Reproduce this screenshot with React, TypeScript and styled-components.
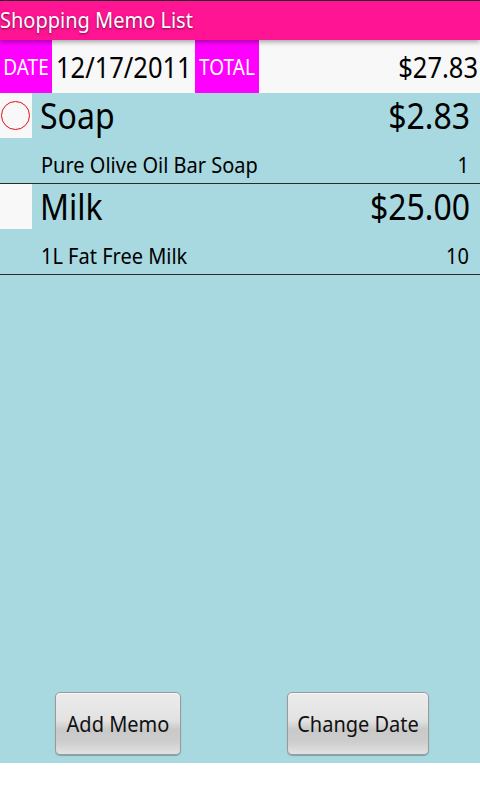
import React from "react";
import styled, { createGlobalStyle } from "styled-components";

const Global = createGlobalStyle`
  html, body { margin: 0; padding: 0; background: #ffffff; }
  body { font-family: "Noto Sans", "Open Sans", sans-serif; }
  * { box-sizing: border-box; }
`;

const Screen = styled.div`
  width: 480px;
  height: 800px;
  display: flex;
  flex-direction: column;
  background: #ffffff;
`;

const Tall = styled.span`
  display: inline-block;
  transform: scaleY(1.11);
  transform-origin: 50% 55%;
`;

const TitleBar = styled.div`
  height: 40px;
  border-top: 1px solid #222;
  background: #ff1493;
  color: #ffffff;
  font-size: 20px;
  line-height: 38px;
  text-shadow: 0 1px 2px rgba(0, 0, 0, 0.55);
  position: relative;
  z-index: 2;
  box-shadow: 0 2px 5px rgba(0, 0, 0, 0.35);
`;

const HeaderRow = styled.div`
  height: 53px;
  display: flex;
  align-items: stretch;
`;

const Label = styled.div<{ $w: number }>`
  width: ${(p) => p.$w}px;
  background: #ff00ff;
  color: #ffffff;
  font-size: 19px;
  display: flex;
  align-items: center;
  justify-content: center;
`;

const Field = styled.div<{ $w?: number; $align?: "left" | "right" }>`
  ${(p) => (p.$w ? `width: ${p.$w}px;` : "flex: 1;")}
  background: #f8f8f8;
  color: #000;
  font-size: 25.5px;
  display: flex;
  align-items: center;
  justify-content: ${(p) => (p.$align === "right" ? "flex-end" : "flex-start")};
  padding: ${(p) => (p.$align === "right" ? "0 2px 0 0" : "0 0 0 4px")};
`;

const Body = styled.div`
  flex: 0 0 670px;
  background: #a8d8e0;
  display: flex;
  flex-direction: column;
`;

const List = styled.div`
  flex: 1;
`;

const Item = styled.div`
  height: 91px;
  border-bottom: 1px solid #2a2a2a;
  display: grid;
  grid-template-columns: 40px 1fr auto;
  grid-template-rows: 45px 45px;
`;

const Check = styled.div`
  width: 32px;
  height: 45px;
  background: #f8f8f8;
  display: flex;
  align-items: center;
  justify-content: center;
`;

const Circle = styled.div`
  width: 29px;
  height: 29px;
  border-radius: 50%;
  border: 1px solid #e01010;
  margin-left: -2px;
`;

const Name = styled.div`
  font-size: 32px;
  line-height: 45px;
  color: #000;
`;

const Price = styled.div`
  font-size: 32px;
  line-height: 45px;
  color: #000;
  text-align: right;
  padding-right: 10px;
`;

const Desc = styled.div`
  grid-column: 2;
  font-size: 20px;
  line-height: 45px;
  padding-top: 4px;
  padding-left: 1px;
  color: #000;
`;

const Qty = styled.div`
  font-size: 20px;
  line-height: 45px;
  padding-top: 4px;
  text-align: right;
  padding-right: 11px;
  color: #000;
`;

const Buttons = styled.div`
  display: grid;
  grid-template-columns: 1fr 1fr;
  padding: 0 0 8px 0;
`;

const Cell = styled.div<{ $shift: number }>`
  display: flex;
  justify-content: center;
  padding-right: ${(p) => p.$shift}px;
`;

const Button = styled.button<{ $w: number }>`
  width: ${(p) => p.$w}px;
  height: 63px;
  border: 1px solid #9a9a9a;
  border-radius: 5px;
  background: linear-gradient(
    to bottom,
    #ececec 0%,
    #e2e2e2 45%,
    #c9c9c9 60%,
    #cdcdcd 80%,
    #e2e2e2 100%
  );
  box-shadow: inset 0 1px 0 #f8f8f8, 0 1px 1px rgba(0, 0, 0, 0.25);
  font-family: "Noto Sans", "Open Sans", sans-serif;
  font-size: 20px;
  color: #111;
  padding: 0;
`;

const items = [
  { name: "Soap", price: "$2.83", desc: "Pure Olive Oil Bar Soap", qty: "1", circle: true },
  { name: "Milk", price: "$25.00", desc: "1L Fat Free Milk", qty: "10", circle: false },
];

export default function App() {
  return (
    <>
      <Global />
      <Screen>
        <TitleBar>
          <Tall>Shopping Memo List</Tall>
        </TitleBar>
        <HeaderRow>
          <Label $w={52}>
            <Tall>DATE</Tall>
          </Label>
          <Field $w={143}>
            <Tall>12/17/2011</Tall>
          </Field>
          <Label $w={64}>
            <Tall>TOTAL</Tall>
          </Label>
          <Field $align="right">
            <Tall>$27.83</Tall>
          </Field>
        </HeaderRow>
        <Body>
          <List>
            {items.map((it) => (
              <Item key={it.name}>
                <Check>{it.circle && <Circle />}</Check>
                <Name>
                  <Tall>{it.name}</Tall>
                </Name>
                <Price>
                  <Tall>{it.price}</Tall>
                </Price>
                <Desc>
                  <Tall>{it.desc}</Tall>
                </Desc>
                <Qty>
                  <Tall>{it.qty}</Tall>
                </Qty>
              </Item>
            ))}
          </List>
          <Buttons>
            <Cell $shift={4}>
              <Button $w={126}>
                <Tall>Add Memo</Tall>
              </Button>
            </Cell>
            <Cell $shift={4}>
              <Button $w={142}>
                <Tall>Change Date</Tall>
              </Button>
            </Cell>
          </Buttons>
        </Body>
      </Screen>
    </>
  );
}
